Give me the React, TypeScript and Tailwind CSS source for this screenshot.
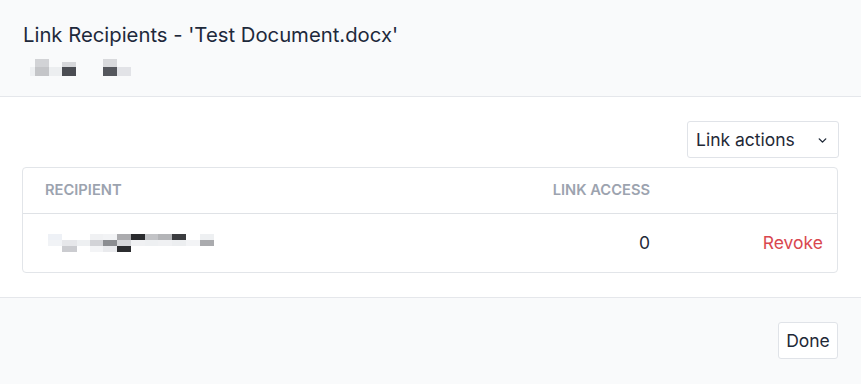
import React from "react";

type Cell = [number, number, number, number, string];

function Mosaic({ w, h, cells, className }: { w: number; h: number; cells: Cell[]; className?: string }) {
  return (
    <svg width={w} height={h} viewBox={`0 0 ${w} ${h}`} className={className} shapeRendering="crispEdges">
      {cells.map(([x, y, cw, ch, c], i) => (
        <rect key={i} x={x} y={y} width={cw} height={ch} fill={c} />
      ))}
    </svg>
  );
}

// origin (30,57)
const subCells: Cell[] = [
  [0, 10, 5, 9, "#eef0f2"],
  [5, 2, 14, 8, "#d2d3d6"],
  [5, 10, 14, 9, "#c4c5c8"],
  [19, 10, 13, 9, "#eceef0"],
  [32, 5, 14, 5, "#d6d7da"],
  [32, 10, 14, 9, "#4b4d53"],
  [73, 2, 14, 8, "#d8d9dc"],
  [73, 10, 14, 9, "#55575d"],
  [87, 10, 14, 9, "#e2e3e7"],
];

// origin (46,233)
const rowCells: Cell[] = [
  [2, 4, 14, 6, "#eef1f6"],
  [2, 10, 14, 6, "#f1f3f6"],
  [16, 10, 15, 6, "#e6e7ea"],
  [16, 16, 15, 6, "#cbccd0"],
  [31, 10, 13, 6, "#eef0f2"],
  [44, 4, 13, 6, "#f0f1f3"],
  [44, 10, 13, 6, "#d2d3d7"],
  [44, 16, 13, 6, "#f3f4f6"],
  [57, 4, 14, 6, "#f2f3f5"],
  [57, 10, 14, 6, "#8b8d91"],
  [57, 16, 14, 6, "#e9eaed"],
  [71, 4, 14, 6, "#ababae"],
  [71, 10, 14, 6, "#d6d7da"],
  [71, 16, 14, 6, "#2b2c2f"],
  [85, 4, 14, 6, "#2a2b2e"],
  [85, 10, 14, 6, "#f0f1f3"],
  [99, 4, 13, 6, "#c2c3c6"],
  [99, 10, 13, 6, "#eef0f2"],
  [112, 4, 14, 6, "#b3b4b7"],
  [112, 10, 14, 6, "#f0f1f3"],
  [126, 4, 14, 6, "#3b3c3f"],
  [126, 10, 14, 6, "#eceef0"],
  [140, 10, 14, 6, "#f3f4f6"],
  [154, 4, 14, 6, "#eef0f2"],
  [154, 10, 14, 6, "#aaabae"],
];

export default function App() {
  return (
    <div
      className="w-[861px] h-[384px] bg-white flex flex-col text-[#1f2937]"
      style={{ fontFamily: "Inter, 'Noto Sans', sans-serif" }}
    >
      <div className="h-[97px] shrink-0 bg-[#f9fafb] border-b border-[#e5e7eb] px-[23px] pt-[21px]">
        <div className="text-[20.3px] leading-[28px] text-[#1e293b]">Link Recipients - 'Test Document.docx'</div>
        <Mosaic w={110} h={22} cells={subCells} className="ml-[7px] mt-[8px]" />
      </div>
      <div className="h-[201px] shrink-0 border-b border-[#e5e7eb] px-[23px] pt-[24px]">
        <div className="flex justify-end">
          <button className="h-[37px] w-[152px] border border-[#e0e3e8] rounded-[3px] bg-white flex items-center justify-between pl-[8px] pr-[9px] pt-[2px] text-[17.5px] text-[#1f2937] -mr-px">
            <span>Link actions</span>
            <svg width="13" height="13" viewBox="0 0 24 24" fill="none" stroke="#1f2937" strokeWidth="2.6" strokeLinecap="round" strokeLinejoin="round">
              <path d="M6 9l6 6 6-6" />
            </svg>
          </button>
        </div>
        <div className="mt-[9px] -ml-px border border-[#e2e5e9] rounded-[4px]">
          <div className="h-[46px] flex items-center border-b border-[#dfe2e6]">
            <div className="pl-[22px] flex-1 text-[14.7px] font-semibold text-[#9ca3af]">RECIPIENT</div>
            <div className="w-[300px] text-right text-[14.7px] font-semibold text-[#9ca3af]">LINK ACCESS</div>
            <div className="w-[187px]"></div>
          </div>
          <div className="h-[58px] flex items-center">
            <div className="flex-1 pl-[23px]">
              <Mosaic w={170} h={26} cells={rowCells} />
            </div>
            <div className="w-[300px] text-right text-[17.5px]">0</div>
            <div className="w-[187px] text-right pr-[14px] text-[17.5px] text-[#d9474f]">Revoke</div>
          </div>
        </div>
      </div>
      <div className="flex-1 bg-[#f9fafb] flex justify-end items-start pt-[24px] pr-[23px]">
        <button className="h-[37px] w-[60px] border border-[#e0e3e8] rounded-[3px] bg-white pt-[2px] text-[17.5px] text-[#1f2937]">Done</button>
      </div>
    </div>
  );
}
